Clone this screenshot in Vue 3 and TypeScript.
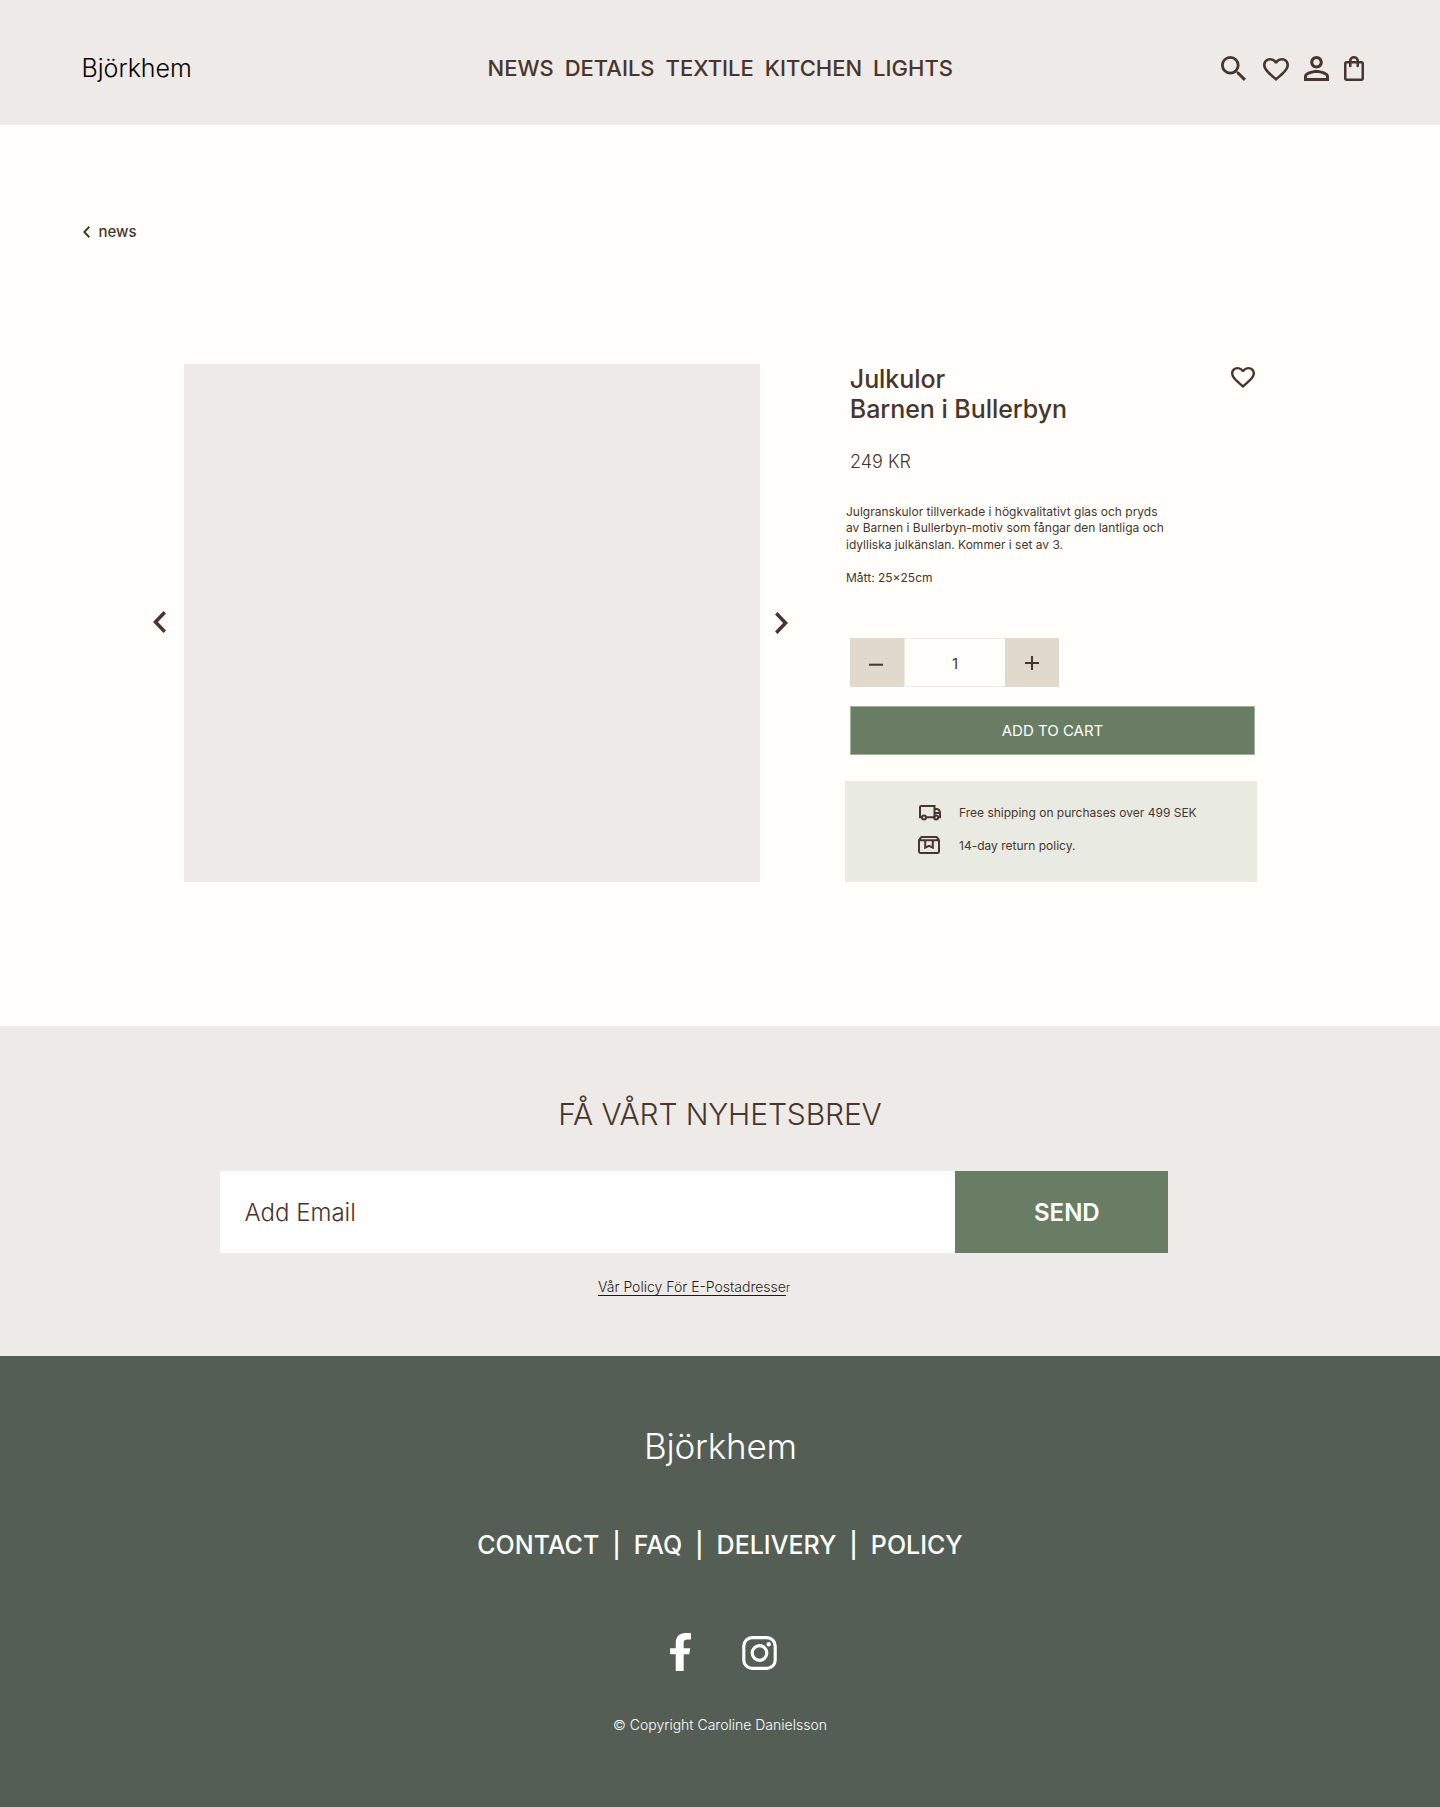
<script setup lang="ts">
import { ref } from 'vue'

const categories: string[] = ['NEWS', 'DETAILS', 'TEXTILE', 'KITCHEN', 'LIGHTS']
const footerLinks: string[] = ['CONTACT', 'FAQ', 'DELIVERY', 'POLICY']
const quantity = ref<number>(1)
const email = ref<string>('')

const heart =
  'M16.5 3c-1.74 0-3.41.81-4.5 2.09C10.91 3.81 9.24 3 7.5 3 4.42 3 2 5.42 2 8.5c0 3.78 3.4 6.86 8.55 11.54L12 21.35l1.45-1.32C18.6 15.36 22 12.28 22 8.5 22 5.42 19.58 3 16.5 3zm-4.4 15.55-.1.1-.1-.1C7.14 14.24 4 11.39 4 8.5 4 6.5 5.5 5 7.5 5c1.54 0 3.04.99 3.57 2.36h1.87C13.46 5.99 14.96 5 16.5 5c2 0 3.5 1.5 3.5 3.5 0 2.89-3.14 5.74-7.9 10.05z'

function changeQuantity(step: number): void {
  quantity.value = Math.max(1, quantity.value + step)
}
</script>

<template>
  <div class="page">
    <header class="header">
      <a class="logo">Björkhem</a>
      <nav class="nav">{{ categories.join('\u00a0 ') }}</nav>
      <div class="actions">
        <svg class="i-search" viewBox="3 3 17.49 17.49" preserveAspectRatio="none">
          <path d="M15.5 14h-.79l-.28-.27A6.471 6.471 0 0 0 16 9.5 6.5 6.5 0 1 0 9.5 16c1.61 0 3.09-.59 4.23-1.57l.27.28v.79l5 4.99L20.49 19l-4.99-5zm-6 0C7.01 14 5 11.99 5 9.5S7.01 5 9.5 5 14 7.01 14 9.5 11.99 14 9.5 14z" />
        </svg>
        <svg class="i-heart" viewBox="2 3 20 18.35" preserveAspectRatio="none"><path :d="heart" /></svg>
        <svg class="i-person" viewBox="4 4 16 16">
          <path d="M12 5.9c1.16 0 2.1.94 2.1 2.1s-.94 2.1-2.1 2.1S9.9 9.16 9.9 8s.94-2.1 2.1-2.1m0 9c2.97 0 6.1 1.46 6.1 2.1v1.1H5.9V17c0-.64 3.13-2.1 6.1-2.1M12 4C9.79 4 8 5.79 8 8s1.79 4 4 4 4-1.79 4-4-1.79-4-4-4zm0 9c-2.67 0-8 1.34-8 4v3h16v-3c0-2.66-5.33-4-8-4z" />
        </svg>
        <svg class="i-bag" viewBox="4 2 16 20">
          <path d="M18 6h-2c0-2.21-1.79-4-4-4S8 3.79 8 6H6c-1.1 0-2 .9-2 2v12c0 1.1.9 2 2 2h12c1.1 0 2-.9 2-2V8c0-1.1-.9-2-2-2zm-6-2c1.1 0 2 .9 2 2h-4c0-1.1.9-2 2-2zm6 16H6V8h2v2c0 .55.45 1 1 1s1-.45 1-1V8h4v2c0 .55.45 1 1 1s1-.45 1-1V8h2v12z" />
        </svg>
      </div>
    </header>

    <main class="main">
      <a class="back">
        <svg class="i-back" viewBox="8 6 7.41 12" preserveAspectRatio="none"><path d="M15.41 7.41 14 6l-6 6 6 6 1.41-1.41L10.83 12z" /></svg>
        <span>news</span>
      </a>

      <section class="product">
        <svg class="arrow prev" viewBox="8 6 7.41 12" preserveAspectRatio="none"><path d="M15.41 7.41 14 6l-6 6 6 6 1.41-1.41L10.83 12z" /></svg>
        <div class="photo"></div>
        <svg class="arrow next" viewBox="8.59 6 7.41 12" preserveAspectRatio="none"><path d="M10 6 8.59 7.41 13.17 12l-4.58 4.59L10 18l6-6z" /></svg>

        <div class="details">
          <div class="title-row">
            <h1 class="title">Julkulor<br />Barnen i Bullerbyn</h1>
            <svg class="i-like" viewBox="2 3 20 18.35" preserveAspectRatio="none"><path :d="heart" /></svg>
          </div>
          <p class="price">249 KR</p>
          <p class="description">
            Julgranskulor tillverkade i högkvalitativt glas och pryds<br />av Barnen i Bullerbyn-motiv som fångar den lantliga och<br />idylliska julkänslan. Kommer i set av 3.<br /><br />Mått: 25×25cm
          </p>
          <div class="quantity">
            <button class="step" @click="changeQuantity(-1)">
              <svg class="i-minus" viewBox="0 0 14 14"><path d="M0 7.7h14v2H0z" /></svg>
            </button>
            <span class="amount">{{ quantity }}</span>
            <button class="step" @click="changeQuantity(1)">
              <svg class="i-plus" viewBox="0 0 14 14"><path d="M6 0h2v6h6v2H8v6H6V8H0V6h6z" /></svg>
            </button>
          </div>
          <button class="cart">ADD TO CART</button>
          <ul class="perks">
            <li>
              <svg class="i-truck" viewBox="0 0 22 16" fill="none" stroke="currentColor" stroke-width="2">
                <path d="M2.6 12.2H1V2.2Q1 1 2.2 1h13.3v11.2H7.4M15.5 4h2.3q3.1.3 3.2 4v4.2h-1.7M15.5 8h5.2" />
                <circle cx="5" cy="12.4" r="2" />
                <circle cx="17.1" cy="12.4" r="2" />
              </svg>
              <span>Free shipping on purchases over 499 SEK</span>
            </li>
            <li>
              <svg class="i-box" viewBox="0 0 22 18" fill="none" stroke="currentColor" stroke-width="2">
                <path d="M1 4v11.6Q1 17 2.4 17h17.2q1.4 0 1.4-1.4V4l-1.8-2.4Q18.8 1 18 1H4q-.8 0-1.2.6zM1.4 4.3h19.2" />
                <path d="M7.2 4.6V11.6L11 9.9l3.8 1.7V4.6" />
              </svg>
              <span>14-day return policy.</span>
            </li>
          </ul>
        </div>
      </section>
    </main>

    <section class="newsletter">
      <h2>FÅ VÅRT NYHETSBREV</h2>
      <form class="signup" @submit.prevent>
        <input v-model="email" type="text" placeholder="Add Email" />
        <button>SEND</button>
      </form>
      <p class="policy"><a>Vår Policy För E-Postadresse</a><small>r</small></p>
    </section>

    <footer class="footer">
      <div class="footer-logo">Björkhem</div>
      <nav class="footer-nav">{{ footerLinks.join('\u00a0 |\u00a0 ') }}</nav>
      <div class="social">
        <svg class="i-fb" viewBox="0 0 21 38.3">
          <path d="M5.7 38.3V21.3H0V15.3h5.7V10C5.7 3.5 9.5 0 15.5 0H21v6.5h-3.4c-3 0-3.9 1.3-3.9 3.7v5.1h6.6l-1 6h-5.6v17z" />
        </svg>
        <svg class="i-ig" viewBox="0 0 35 34.4" fill="none" stroke="currentColor" stroke-width="3.2">
          <rect x="1.6" y="1.6" width="31.8" height="31.2" rx="8.4" />
          <circle cx="17.5" cy="17.2" r="7.4" />
          <circle cx="26.8" cy="8.3" r="2.2" fill="currentColor" stroke="none" />
        </svg>
      </div>
      <p class="copyright">© Copyright Caroline Danielsson</p>
    </footer>
  </div>
</template>

<style>
body {
  margin: 0;
}
</style>

<style scoped>
.page {
  width: 1440px;
  font-family: Inter, 'Liberation Sans', sans-serif;
  color: #48352d;
  background: #fffefa;
}
h1, h2, p, ul {
  margin: 0;
  padding: 0;
}
button, input {
  font-family: inherit;
  border: 0;
  border-radius: 0;
  padding: 0;
  margin: 0;
  outline: 0;
  color: inherit;
}
svg {
  display: block;
  flex: none;
  fill: currentColor;
}
svg[fill='none'] {
  fill: none;
}

.header {
  box-sizing: border-box;
  height: 125px;
  padding: 11px 76px 0 81.5px;
  display: grid;
  grid-template-columns: 1fr auto 1fr;
  align-items: center;
  background: #eeeae7;
}
.logo {
  font-size: 25px;
  line-height: 30px;
  font-weight: 300;
  color: #000;
}
.nav {
  margin-right: 5px;
  font-size: 22px;
  line-height: 26px;
  font-weight: 500;
  word-spacing: -0.35px;
  white-space: nowrap;
}
.actions {
  display: flex;
  justify-content: flex-end;
  align-items: center;
}
.i-search { width: 25px; height: 25px; }
.i-heart { width: 26px; height: 23px; margin: 2px 15px 0 17px; }
.i-person { width: 25px; height: 25px; }
.i-bag { width: 20px; height: 25px; margin-left: 15px; }

.main {
  box-sizing: border-box;
  height: 901px;
  padding-top: 97px;
}
.back {
  display: flex;
  align-items: center;
  gap: 8.5px;
  width: max-content;
  margin-left: 83px;
  font-size: 15px;
  line-height: 20px;
  font-weight: 500;
}
.i-back { width: 7px; height: 12px; }

.product {
  display: flex;
  align-items: center;
  margin: 122px 0 0 153px;
}
.arrow { width: 13px; height: 22px; }
.prev { margin: 0 18px 2px 0; }
.next { margin: 0 57px 0 15px; }
.photo {
  flex: none;
  width: 576px;
  height: 518px;
  background: #eeeae7;
}
.details {
  width: 412px;
  height: 518px;
}
.title-row {
  display: flex;
  justify-content: space-between;
  padding: 0 2px 0 4.8px;
}
.title {
  font-size: 25px;
  line-height: 30px;
  font-weight: 500;
  letter-spacing: -0.05px;
}
.i-like { width: 24px; height: 21px; margin-top: 3px; }
.price {
  margin: 27px 0 0 5px;
  font-size: 18px;
  line-height: 22px;
  font-weight: 300;
}
.description {
  margin: 30.5px 0 0 1px;
  font-size: 12px;
  line-height: 16.5px;
  white-space: nowrap;
}
.quantity {
  display: flex;
  width: 209px;
  height: 49px;
  margin: 52px 0 0 5px;
}
.step {
  display: flex;
  align-items: center;
  justify-content: center;
  width: 54px;
  background: #e2d9cd;
}
.i-minus, .i-plus { width: 14px; height: 14px; }
.i-minus { margin-right: 2px; }
.amount {
  box-sizing: border-box;
  width: 101px;
  border: 1px solid #eeeae7;
  border-right: 0;
  font-size: 15px;
  line-height: 49px;
  text-align: center;
}
.cart {
  display: block;
  box-sizing: border-box;
  width: 405px;
  height: 49px;
  margin: 19px 0 0 5px;
  border: 1px solid #a2b09e;
  background: #697d65;
  color: #fff;
  font-size: 15px;
  line-height: 47px;
  font-weight: 400;
}
.perks {
  box-sizing: border-box;
  height: 101px;
  margin-top: 26px;
  padding: 22px 0 0 73px;
  display: flex;
  flex-direction: column;
  gap: 13px;
  list-style: none;
  background: #e9ebe3;
  font-size: 12px;
  line-height: 20px;
}
.perks li {
  display: flex;
  align-items: center;
}
.i-truck { width: 22px; height: 16px; margin: 0 18px 0 1px; }
.i-box { width: 22px; height: 18px; margin: 0 19px 2px 0; }

.newsletter {
  box-sizing: border-box;
  height: 330px;
  padding-top: 70px;
  background: #eeeae7;
}
.newsletter h2 {
  font-size: 30px;
  line-height: 36px;
  font-weight: 300;
  letter-spacing: -0.14px;
  text-align: center;
}
.signup {
  display: flex;
  width: 948px;
  height: 82px;
  margin: 39px 0 0 220px;
}
.signup input {
  box-sizing: border-box;
  width: 735px;
  padding: 0 24px 0 24.5px;
  background: #fff;
  font-size: 24px;
  font-weight: 300;
}
.signup input::placeholder {
  color: #48352d;
  opacity: 1;
}
.signup button {
  box-sizing: border-box;
  width: 213px;
  padding-left: 79px;
  background: #697d65;
  color: #fff;
  font-size: 24px;
  font-weight: 600;
  text-align: left;
}
.policy {
  margin: 24px 0 0 598px;
  font-size: 14px;
  line-height: 20px;
  font-weight: 300;
  color: #1e1a18;
}
.policy a {
  text-decoration: underline;
  text-decoration-thickness: 1px;
  text-decoration-skip-ink: none;
  text-underline-offset: 3px;
}
.policy small {
  font-size: 11px;
  line-height: 1;
}

.footer {
  box-sizing: border-box;
  height: 451px;
  padding-top: 69px;
  display: flex;
  flex-direction: column;
  align-items: center;
  background: #545e55;
  color: #fff;
}
.footer-logo {
  margin-left: 1px;
  font-size: 35px;
  line-height: 42px;
  font-weight: 300;
  letter-spacing: -0.2px;
}
.footer-nav {
  margin-top: 63px;
  font-size: 25px;
  line-height: 30px;
  font-weight: 500;
  word-spacing: -0.22px;
}
.social {
  display: flex;
  align-items: center;
  gap: 51px;
  margin: 73px 0 0 7px;
}
.i-fb { width: 21px; height: 38px; }
.i-ig { width: 35px; height: 34px; margin-top: 2px; }
.copyright {
  margin-top: 44px;
  font-size: 14px;
  line-height: 20px;
  font-weight: 300;
}
</style>
